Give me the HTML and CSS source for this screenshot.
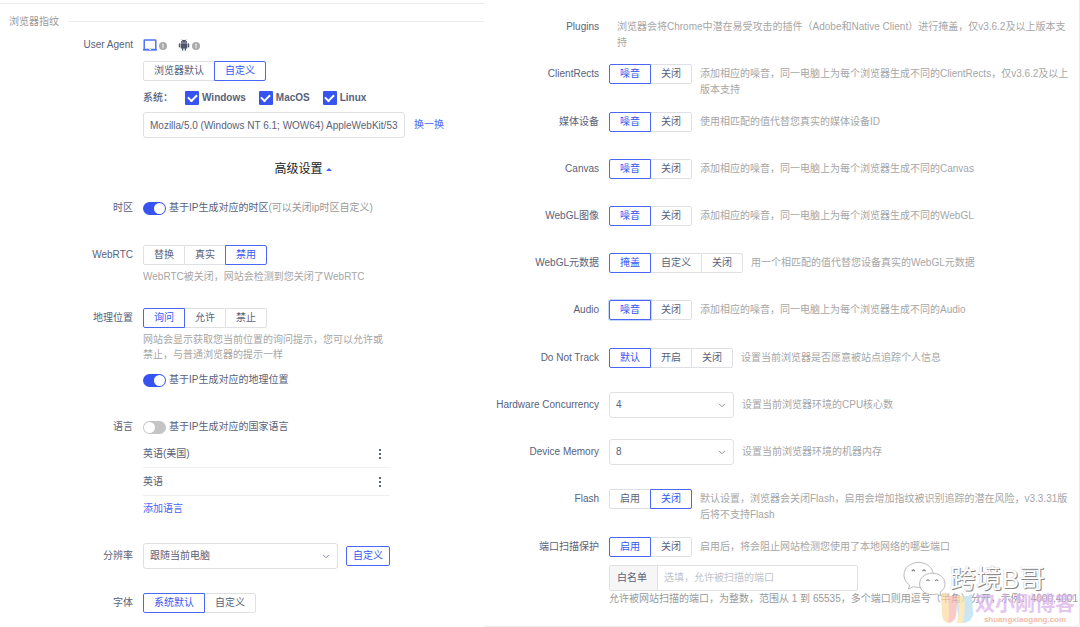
FILE: index.html
```html
<!DOCTYPE html>
<html lang="zh-CN">
<head>
<meta charset="utf-8">
<title>浏览器指纹</title>
<link rel="stylesheet" href="styles.css">
</head>
<body>
<form class="page">
  <section class="panel panel-left">
    <h2 class="heading">浏览器指纹</h2>

    <div class="row row-flush">
      <span class="label">User Agent</span>
      <div class="content stack">
        <div class="line devices">
          <svg class="icon-pc" viewBox="0 0 14 12"><rect x="1.200" y="1" width="11.600" height="9.400" rx=".6" fill="none" stroke="#4f73f8" stroke-width="1.500"/><path d="M0 10h14v1.600H0z" fill="#4f73f8"/><path d="M6 10.300h2v.6H6z" fill="#fff"/></svg>
          <svg class="icon-info" viewBox="0 0 8 8"><circle cx="4" cy="4" r="4" fill="#aaa"/><path d="M3.500 1.700h1v3h-1zM3.500 5.300h1v1h-1z" fill="#fff"/></svg>
          <svg class="icon-android" viewBox="0 0 12 12"><path d="M2.700 3.800C2.800 2.600 3.300 1.900 4.100 1.400L3.500.4l.3-.2.6 1a4 4 0 0 1 3.200 0l.6-1 .3.200-.6 1c.8.5 1.300 1.200 1.400 2.400zM2.700 4.300h6.600v4.700a.6.6 0 0 1-.6.6H8v1.500a.6.6 0 0 1-1.300 0V9.600H5.300v1.500a.6.6 0 0 1-1.300 0V9.600h-.7a.6.6 0 0 1-.6-.6z" fill="#4d566b"/><rect x=".8" y="4.200" width="1.400" height="4.200" rx=".7" fill="#4d566b"/><rect x="9.800" y="4.200" width="1.400" height="4.200" rx=".7" fill="#4d566b"/><circle cx="4.600" cy="2.600" r=".35" fill="#fff"/><circle cx="7.400" cy="2.600" r=".35" fill="#fff"/></svg>
          <svg class="icon-info" viewBox="0 0 8 8"><circle cx="4" cy="4" r="4" fill="#aaa"/><path d="M3.500 1.700h1v3h-1zM3.500 5.300h1v1h-1z" fill="#fff"/></svg>
        </div>
        <div class="segment"><button type="button">浏览器默认</button><button type="button" class="on">自定义</button></div>
        <div class="line systems">
          <span class="systems-title">系统：</span>
          <label class="check"><input type="checkbox" checked>Windows</label>
          <label class="check"><input type="checkbox" checked>MacOS</label>
          <label class="check"><input type="checkbox" checked>Linux</label>
        </div>
        <div class="line agent">
          <input class="box" type="text" aria-label="User Agent" value="Mozilla/5.0 (Windows NT 6.1; WOW64) AppleWebKit/53">
          <a href="#">换一换</a>
        </div>
      </div>
    </div>

    <button type="button" class="advanced">高级设置<span class="caret"></span></button>

    <div class="row row-near">
      <span class="label">时区</span>
      <div class="content">
        <label class="toggle"><input type="checkbox" checked><span>基于IP生成对应的时区<span class="muted">(可以关闭ip时区自定义)</span></span></label>
      </div>
    </div>

    <div class="row">
      <span class="label">WebRTC</span>
      <div class="content">
        <div class="segment"><button type="button">替换</button><button type="button">真实</button><button type="button" class="on">禁用</button></div>
        <p class="hint">WebRTC被关闭，网站会检测到您关闭了WebRTC</p>
      </div>
    </div>

    <div class="row">
      <span class="label">地理位置</span>
      <div class="content">
        <div class="segment"><button type="button" class="on">询问</button><button type="button">允许</button><button type="button">禁止</button></div>
        <p class="hint">网站会显示获取您当前位置的询问提示，您可以允许或禁止，与普通浏览器的提示一样</p>
        <label class="toggle toggle-after"><input type="checkbox" checked><span>基于IP生成对应的地理位置</span></label>
      </div>
    </div>

    <div class="row">
      <span class="label">语言</span>
      <div class="content">
        <label class="toggle"><input type="checkbox"><span>基于IP生成对应的国家语言</span></label>
        <ul class="languages">
          <li>英语(美国)<button type="button" class="more" aria-label="更多"><i></i><i></i><i></i></button></li>
          <li>英语<button type="button" class="more" aria-label="更多"><i></i><i></i><i></i></button></li>
        </ul>
        <a class="add" href="#">添加语言</a>
      </div>
    </div>

    <div class="row">
      <label class="label" for="resolution">分辨率</label>
      <div class="content line resolution">
        <span class="select"><select id="resolution"><option>跟随当前电脑</option></select><svg viewBox="0 0 8 5"><path d="M1 .8l3 3 3-3" fill="none" stroke="#8a92a3"/></svg></span>
        <div class="segment"><button type="button" class="on">自定义</button></div>
      </div>
    </div>

    <div class="row">
      <span class="label">字体</span>
      <div class="content">
        <div class="segment"><button type="button" class="on">系统默认</button><button type="button">自定义</button></div>
      </div>
    </div>
  </section>

  <section class="panel panel-right">
    <div class="item">
      <span class="label">Plugins</span>
      <div class="content"><p class="desc desc-only">浏览器会将Chrome中潜在易受攻击的插件（Adobe和Native Client）进行掩盖，仅v3.6.2及以上版本支持</p></div>
    </div>
    <div class="item item-tall">
      <span class="label">ClientRects</span>
      <div class="content option"><div class="segment"><button type="button" class="on">噪音</button><button type="button">关闭</button></div><p class="desc">添加相应的噪音，同一电脑上为每个浏览器生成不同的ClientRects，仅v3.6.2及以上版本支持</p></div>
    </div>
    <div class="item">
      <span class="label">媒体设备</span>
      <div class="content option"><div class="segment"><button type="button" class="on">噪音</button><button type="button">关闭</button></div><p class="desc">使用相匹配的值代替您真实的媒体设备ID</p></div>
    </div>
    <div class="item">
      <span class="label">Canvas</span>
      <div class="content option"><div class="segment"><button type="button" class="on">噪音</button><button type="button">关闭</button></div><p class="desc">添加相应的噪音，同一电脑上为每个浏览器生成不同的Canvas</p></div>
    </div>
    <div class="item">
      <span class="label">WebGL图像</span>
      <div class="content option"><div class="segment"><button type="button" class="on">噪音</button><button type="button">关闭</button></div><p class="desc">添加相应的噪音，同一电脑上为每个浏览器生成不同的WebGL</p></div>
    </div>
    <div class="item">
      <span class="label">WebGL元数据</span>
      <div class="content option"><div class="segment"><button type="button" class="on">掩盖</button><button type="button">自定义</button><button type="button">关闭</button></div><p class="desc">用一个相匹配的值代替您设备真实的WebGL元数据</p></div>
    </div>
    <div class="item item-tall">
      <span class="label">Audio</span>
      <div class="content option"><div class="segment"><button type="button" class="on focused">噪音</button><button type="button">关闭</button></div><p class="desc">添加相应的噪音，同一电脑上为每个浏览器生成不同的Audio</p></div>
    </div>
    <div class="item">
      <span class="label">Do Not Track</span>
      <div class="content option"><div class="segment"><button type="button" class="on">默认</button><button type="button">开启</button><button type="button">关闭</button></div><p class="desc">设置当前浏览器是否愿意被站点追踪个人信息</p></div>
    </div>
    <div class="item">
      <label class="label" for="cpu">Hardware Concurrency</label>
      <div class="content option"><span class="select select-small"><select id="cpu"><option>4</option></select><svg viewBox="0 0 8 5"><path d="M1 .8l3 3 3-3" fill="none" stroke="#8a92a3"/></svg></span><p class="desc">设置当前浏览器环境的CPU核心数</p></div>
    </div>
    <div class="item">
      <label class="label" for="memory">Device Memory</label>
      <div class="content option"><span class="select select-small"><select id="memory"><option>8</option></select><svg viewBox="0 0 8 5"><path d="M1 .8l3 3 3-3" fill="none" stroke="#8a92a3"/></svg></span><p class="desc">设置当前浏览器环境的机器内存</p></div>
    </div>
    <div class="item item-tall">
      <span class="label">Flash</span>
      <div class="content option"><div class="segment"><button type="button">启用</button><button type="button" class="on">关闭</button></div><p class="desc">默认设置，浏览器会关闭Flash，启用会增加指纹被识别追踪的潜在风险，v3.3.31版后将不支持Flash</p></div>
    </div>
    <div class="item">
      <span class="label">端口扫描保护</span>
      <div class="content">
        <div class="option"><div class="segment"><button type="button" class="on">启用</button><button type="button">关闭</button></div><p class="desc">启用后，将会阻止网站检测您使用了本地网络的哪些端口</p></div>
        <div class="whitelist"><label for="ports">白名单</label><input id="ports" type="text" placeholder="选填，允许被扫描的端口"></div>
        <p class="ports-hint">允许被网站扫描的端口，为整数，范围从 1 到 65535，多个端口则用逗号（半角）分开，示例：4000,4001</p>
      </div>
    </div>

    <div class="mark-blog">
      <svg viewBox="0 0 34 32"><path d="M1 2Q5 0 9 3q4 3 7-1l-1 22q-1 7-6 7-6 0-7-8z" fill="#fbd9a0"/><path d="M7 2q5 5 11 0l-2 22q-2 7-8 6 3-12-1-28z" fill="#f7b5b0"/><path d="M17 3q8 3 15-1l1 21q-3 9-13 8-4-12-3-28z" fill="#b3dcf2"/><path d="M17 3q3 2 7 1 2 14-1 27h-6q4-13 0-28z" fill="#fbe0a0"/></svg>
      <div class="mark-blog-text"><strong>双小刚博客</strong><small>shuangxiaogang.com</small></div>
    </div>
    <div class="mark-wechat">
      <svg viewBox="0 0 44 36"><g fill="#fff" stroke="#a8a8a8" stroke-width=".8"><path d="M16 1C7.500 1 1 6.700 1 14c0 4.200 2.200 7.800 5.700 10.200L5.500 28.500l5-2.700c1.700.5 3.500.8 5.500.8 8.500 0 15-5.400 15-12.600S24.500 1 16 1z"/><path d="M30 12c-7.500 0-13 5-13 11s5.500 11 13 11c1.700 0 3.200-.3 4.600-.7l4.400 2.200-1.200-3.700C41 29.700 43 26.600 43 23c0-6-5.500-11-13-11z"/></g><path d="M9 10q1.500-2.500 3 0M20 10q1.500-2.500 3 0M24 20q1.500-2.500 3 0M33 20q1.500-2.500 3 0" fill="none" stroke="#777" stroke-width="1.200"/></svg>
      <span>跨境B哥</span>
    </div>
  </section>
</form>
</body>
</html>
```
FILE: styles.css
```css
* {
  box-sizing: border-box;
}

body {
  margin: 0;
  background: #fff;
  color: #59627a;
  font: 10px/16px "Liberation Sans", "Noto Sans CJK SC", sans-serif;
}

p, ul, h2 {
  margin: 0;
  padding: 0;
}

button, input, select {
  font: inherit;
  color: inherit;
}

a {
  color: #4665f5;
  text-decoration: none;
}

svg {
  display: block;
  flex: none;
}

.page {
  display: grid;
  grid-template-columns: 484fr 596fr;
}

.panel-left {
  margin-top: 3px;
  border-top: 1px solid #ebebeb;
  padding-top: 7px;
}

.panel-right {
  position: relative;
  padding: 14px 9px 19px 0;
  border-right: 1px solid #ebebeb;
  border-bottom: 1px solid #ebebeb;
  border-bottom-right-radius: 4px;
}

.heading {
  display: flex;
  align-items: center;
  gap: 9px;
  padding-left: 9px;
  color: #999;
  font-size: 10px;
  font-weight: 400;
  line-height: 21px;
}

.heading::after {
  content: "";
  flex: 1;
  border-top: 1px solid #ebebeb;
}

.row, .item {
  display: grid;
  align-items: start;
  column-gap: 10px;
}

.row {
  grid-template-columns: 133px minmax(0, 1fr);
  margin-top: 21px;
}

.row-flush {
  margin-top: 0;
}

.row-near {
  margin-top: 13px;
}

.item {
  grid-template-columns: 115px minmax(0, 1fr);
  min-height: 47px;
}

.item-tall {
  min-height: 48px;
}

.label {
  line-height: 26px;
  text-align: right;
  white-space: nowrap;
}

.row .label {
  line-height: 25px;
}

.stack {
  display: grid;
  gap: 1px;
}

.line {
  display: flex;
  align-items: center;
  min-height: 26px;
}

.devices {
  min-height: 25px;
}

.segment {
  display: flex;
  flex: none;
  padding: 3px 0;
}

.segment button {
  height: 20px;
  padding: 0 10px;
  border: 1px solid #dfe0e4;
  background: #fff;
  line-height: 18px;
  white-space: nowrap;
}

.segment button + button {
  margin-left: -1px;
}

.segment button:first-child {
  border-radius: 2px 0 0 2px;
}

.segment button:last-child {
  border-radius: 0 2px 2px 0;
}

.segment button:only-child {
  padding: 0 6px;
  border-radius: 2px;
}

.segment .on {
  z-index: 1;
  border-color: #4a68f5;
  color: #3557f4;
}

.segment .focused {
  box-shadow: 0 0 0 1px #c5d5fb;
}

.icon-pc {
  width: 14px;
  height: 12px;
}

.icon-info {
  width: 8px;
  height: 8px;
  margin: 2px 11px 0 2px;
}

.icon-android {
  width: 12px;
  height: 12px;
}

.systems {
  font-weight: 700;
}

.systems-title {
  width: 42px;
  font-weight: 500;
}

.check {
  display: flex;
  align-items: center;
  gap: 3px;
  margin-right: 13px;
}

.check input {
  display: grid;
  place-content: center;
  width: 14px;
  height: 14px;
  margin: 0;
  border-radius: 1px;
  background: #3754f0;
  appearance: none;
}

.check input::after {
  content: "";
  width: 7px;
  height: 4px;
  margin-bottom: 2px;
  border: solid #fff;
  border-width: 0 0 2px 2px;
  transform: rotate(-45deg);
}

.agent {
  gap: 9px;
}

.box {
  width: 262px;
  height: 26px;
  padding: 0 6px;
  border: 1px solid #dfe0e4;
  border-radius: 3px;
  background: #fff;
}

.advanced {
  display: flex;
  align-items: center;
  justify-content: center;
  gap: 3px;
  width: calc(100% - 164px);
  height: 26px;
  margin: 18px 0 0 143px;
  padding: 0;
  border: 0;
  background: none;
  color: #222;
  font-size: 12px;
}

.caret {
  border: 3px solid transparent;
  border-top: 0;
  border-bottom-color: #4665f5;
}

.toggle {
  display: flex;
  align-items: center;
  gap: 3px;
  height: 26px;
}

.toggle-after {
  margin-top: 6px;
}

.toggle input {
  display: flex;
  width: 23px;
  height: 13px;
  margin: 0;
  padding: 1px;
  border-radius: 7px;
  background: #c4c4c4;
  appearance: none;
}

.toggle input::after {
  content: "";
  width: 11px;
  height: 11px;
  border-radius: 50%;
  background: #fff;
}

.toggle input:checked {
  justify-content: flex-end;
  background: #3754f0;
}

.muted {
  color: #999;
}

.hint {
  max-width: 247px;
  padding-top: 1px;
  color: #a6a6a6;
  line-height: 15px;
}

.toggle-after {
  margin-top: 5px;
}

.languages {
  max-width: 247px;
  list-style: none;
}

.languages li {
  display: flex;
  align-items: center;
  justify-content: space-between;
  height: 28px;
  border-bottom: 1px solid #f0f0f0;
}

.more {
  display: grid;
  gap: 2px;
  padding: 4px 9px;
  border: 0;
  background: none;
}

.more i {
  width: 2px;
  height: 2px;
  background: #59627a;
}

.add {
  display: block;
  line-height: 26px;
}

.resolution {
  gap: 8px;
}

.select {
  position: relative;
  flex: none;
  width: 195px;
}

.select-small {
  width: 125px;
}

.select select {
  display: block;
  width: 100%;
  height: 26px;
  padding: 0 18px 0 6px;
  border: 1px solid #dfe0e4;
  border-radius: 3px;
  background: #fff;
  appearance: none;
}

.select svg {
  position: absolute;
  top: 11px;
  right: 8px;
  width: 8px;
  height: 5px;
}

.option {
  display: flex;
  align-items: flex-start;
  gap: 8px;
}

.desc {
  padding-top: 5px;
  color: #a6a6a6;
}

.desc-only {
  padding-left: 8px;
}

.whitelist {
  display: flex;
  width: 249px;
  height: 26px;
  margin-top: 5px;
  border: 1px solid #dfe0e4;
  border-radius: 2px;
}

.whitelist label {
  padding: 0 10px 0 7px;
  border-right: 1px solid #dfe0e4;
  background: #f6f6f7;
  line-height: 24px;
}

.whitelist input {
  flex: 1;
  min-width: 0;
  padding: 0 6px;
  border: 0;
  background: none;
}

.whitelist input::placeholder {
  color: #c0c4cc;
}

.ports-hint {
  color: #999;
  white-space: nowrap;
}

.mark-wechat, .mark-blog {
  position: absolute;
  display: flex;
  pointer-events: none;
}

.mark-wechat {
  right: 34px;
  bottom: 29px;
  align-items: center;
  gap: 4px;
}

.mark-wechat svg {
  width: 43px;
  height: 36px;
}

.mark-wechat span {
  color: #fff;
  font-size: 26px;
  line-height: 34px;
  text-shadow: 1px 1px 0 #888, 0 0 1px #aaa;
}

.mark-blog {
  right: 4px;
  bottom: 2px;
  align-items: flex-end;
  gap: 1px;
  opacity: 0.7;
}

.mark-blog svg {
  width: 34px;
  height: 32px;
}

.mark-blog-text {
  display: grid;
  justify-items: center;
}

.mark-blog strong {
  color: #d9aeea;
  font-size: 20px;
  line-height: 24px;
}

.mark-blog small {
  color: #ec9f85;
  font-size: 8px;
  font-weight: 700;
  line-height: 8px;
}
```
